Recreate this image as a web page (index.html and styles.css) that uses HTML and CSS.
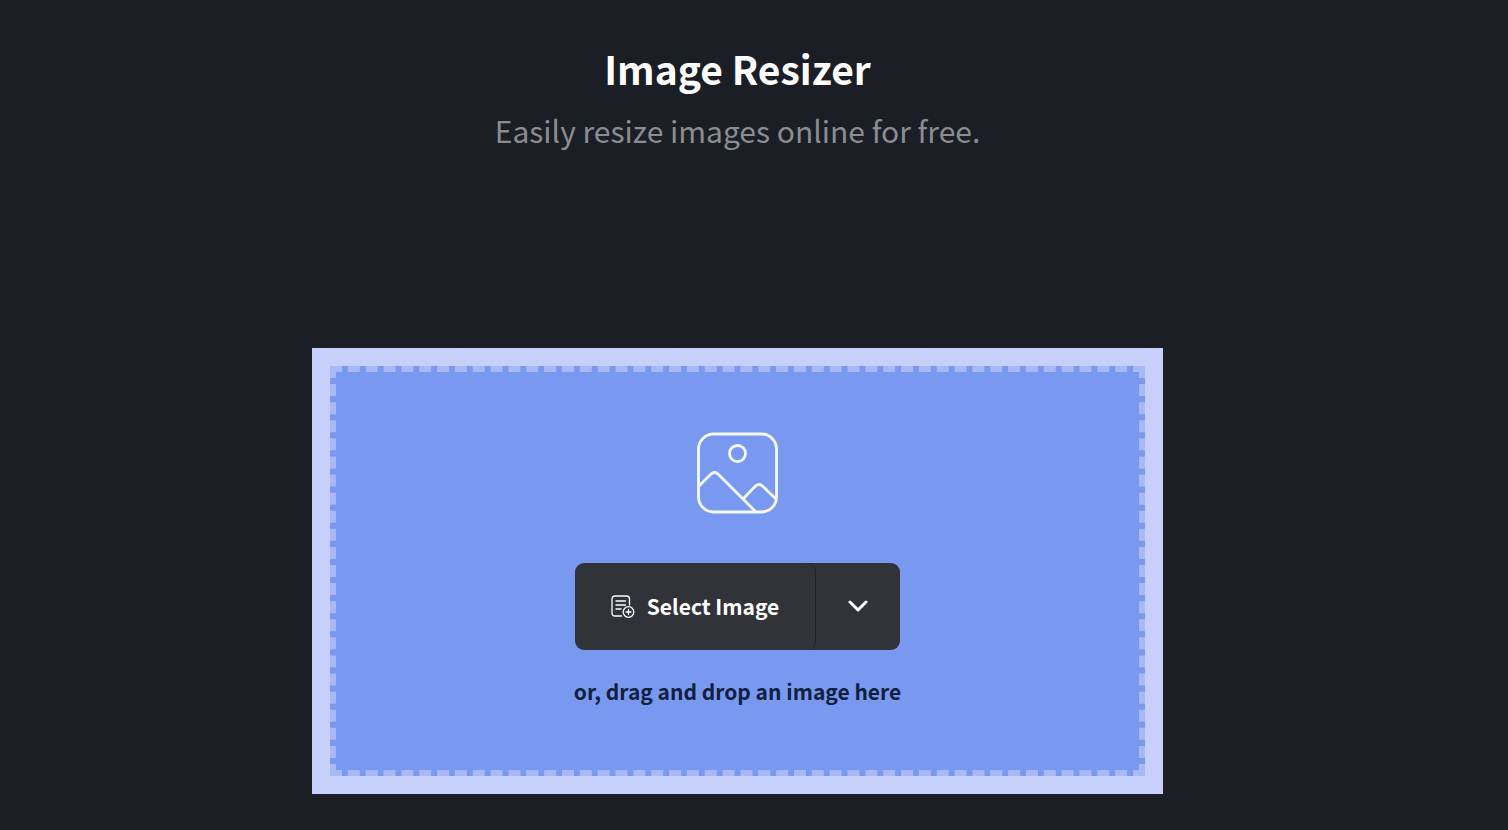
FILE: index.html
```html
<!DOCTYPE html>
<html lang="en">
<head>
<meta charset="utf-8">
<title>Image Resizer</title>
<link rel="stylesheet" href="styles.css">
</head>
<body>
<main class="page">
  <header class="intro">
    <h1 class="title">Image Resizer</h1>
    <p class="subtitle">Easily resize images online for free.</p>
  </header>
  <section class="upload" aria-label="Upload">
    <div class="dropzone">
      <svg class="picture-icon" viewBox="0 0 81 82" fill="none" stroke="currentColor" stroke-width="2.8" aria-hidden="true">
        <rect x="1.500" y="2" width="78" height="78" rx="15"/>
        <circle cx="40.500" cy="21.500" r="8"/>
        <path d="M1.500 54.500 L13.500 42.500 Q17.500 38.500 21.500 42.500 L59 80"/>
        <path d="M46 67 L58 54.500 Q62 50.500 66 54.500 L79.500 67.500"/>
      </svg>
      <div class="split-button">
        <button type="button" class="select">
          <svg class="file-icon" viewBox="0 0 24 24" fill="none" stroke="currentColor" stroke-width="1.300" stroke-linecap="round" aria-hidden="true">
            <path d="M10.500 22 H4 Q1 22 1 19 V5 Q1 2 4 2 H15.500 Q18.500 2 18.500 5 V11"/>
            <path d="M5 7 H14.500 M5 11 H14.500 M5 15 H10"/>
            <circle cx="17.500" cy="18" r="5.300"/>
            <path d="M17.500 15.500 V20.500 M15 18 H20"/>
          </svg>
          <span>Select Image</span>
        </button>
        <button type="button" class="more" aria-label="More sources">
          <svg class="chevron" viewBox="0 0 20 12" fill="none" stroke="currentColor" stroke-width="3" stroke-linecap="round" stroke-linejoin="round" aria-hidden="true">
            <path d="M2 2 L10 10 L18 2"/>
          </svg>
        </button>
      </div>
      <p class="hint">or, drag and drop an image here</p>
    </div>
  </section>
</main>
</body>
</html>
```
FILE: styles.css
```css
* {
  box-sizing: border-box;
}

body {
  margin: 0;
  min-height: 100vh;
  background: #1b1e25;
  color: #fff;
  font-family: "Noto Sans CJK SC", "Noto Sans", sans-serif;
}

.page {
  display: flex;
  flex-direction: column;
  align-items: center;
  gap: 194px;
  padding: 40px 33px 36px 0;
}

.intro {
  text-align: center;
}

.title {
  margin: 0;
  font-size: 39px;
  line-height: 56px;
  font-weight: 700;
}

.subtitle {
  margin: 10px 0 0;
  font-size: 30px;
  line-height: 48px;
  color: #8b8c90;
}

.upload {
  width: 100%;
  max-width: 851px;
  padding: 18px;
  background: #c7d0fb;
}

.dropzone {
  display: flex;
  flex-direction: column;
  align-items: center;
  padding: 60px 24px;
  border: 6px dashed #a9b8f8;
  background: #7999f1;
}

.picture-icon {
  width: 81px;
  height: 82px;
  color: #f4faff;
}

.split-button {
  display: flex;
  height: 87px;
  margin-top: 49px;
  border-radius: 9px;
  background: #323338;
}

.select,
.more {
  display: flex;
  align-items: center;
  justify-content: center;
  margin: 0;
  border: 0;
  background: none;
  color: #fff;
  font-family: inherit;
  cursor: pointer;
}

.select {
  gap: 12px;
  padding: 0 36px 2px;
  border-right: 1px solid #202126;
  border-radius: 9px;
  font-size: 21px;
  font-weight: 700;
}

.more {
  width: 84px;
  padding: 0 0 2px;
}

.file-icon {
  width: 24px;
  height: 24px;
}

.chevron {
  width: 20px;
  height: 12px;
}

.hint {
  margin: 23px 0 0;
  padding-bottom: 1px;
  font-size: 21px;
  line-height: 36px;
  font-weight: 700;
  color: #10203f;
}
```
